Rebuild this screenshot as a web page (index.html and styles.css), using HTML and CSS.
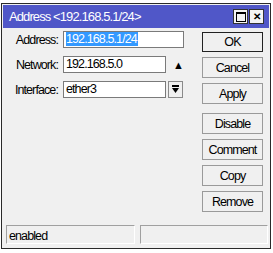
FILE: index.html
```html
<!DOCTYPE html>
<html lang="en">
<head>
    <meta charset="UTF-8">
    <title>Address &lt;192.168.5.1/24&gt;</title>
    <link rel="stylesheet" href="styles.css">
</head>
<body>
    <div class="window">
        <div class="titlebar">
            <span class="title">Address &lt;192.168.5.1/24&gt;</span>
            <div class="title-btns">
                <div class="tbtn"><span class="max-icon"></span></div>
                <div class="tbtn close">&#x2715;</div>
            </div>
        </div>
        <div class="main">
            <div class="form">
                <div class="row">
                    <label>Address:</label>
                    <div class="field wide"><span class="sel">192.168.5.1/24</span></div>
                </div>
                <div class="row">
                    <label>Network:</label>
                    <div class="field">192.168.5.0</div>
                    <span class="arrow">&#9650;</span>
                </div>
                <div class="row">
                    <label>Interface:</label>
                    <div class="field">ether3</div>
                    <div class="dd">
                        <svg width="9" height="9" viewBox="0 0 9 9"><rect x="1" y="0" width="7" height="2" fill="#000"/><polygon points="1,3 8,3 4.5,8" fill="#000"/></svg>
                    </div>
                </div>
            </div>
            <div class="buttons">
                <div class="btn default">OK</div>
                <div class="btn">Cancel</div>
                <div class="btn">Apply</div>
                <div class="btn gap">Disable</div>
                <div class="btn">Comment</div>
                <div class="btn">Copy</div>
                <div class="btn">Remove</div>
            </div>
        </div>
        <div class="status">
            <div class="cell">enabled</div>
            <div class="cell"></div>
        </div>
    </div>
</body>
</html>
```

FILE: styles.css
```css
body {
    margin: 0;
    background: white;
    font-family: "Liberation Sans", Arial, sans-serif;
    font-size: 12.5px;
    letter-spacing: -0.9px;
}
.window {
    margin: 3px 0 0 1px;
    width: 270px;
    height: 246px;
    border: 1px solid #2a2a2a;
    background: #f0f0f0;
    display: flex;
    flex-direction: column;
    box-sizing: border-box;
}
.titlebar {
    height: 23px;
    background: #5057c8;
    color: white;
    display: flex;
    align-items: center;
    justify-content: space-between;
    padding: 0 5px 0 6px;
    border: 1px solid #f0f0f0;
    border-bottom: none;
}
.title { font-size: 13px; letter-spacing: -0.9px; }
.title-btns { display: flex; gap: 1px; }
.tbtn {
    width: 13px;
    height: 13px;
    background: #f4f4f4;
    border: 1px solid #333;
    display: flex;
    align-items: center;
    justify-content: center;
    color: #000;
    font-size: 10px;
    font-weight: bold;
    letter-spacing: 0;
}
.max-icon {
    width: 8px;
    height: 7px;
    border: 1px solid #000;
    border-top-width: 2px;
}
.main {
    flex: 1;
    display: flex;
    justify-content: space-between;
    padding: 3px 7px 0 0;
}
.form { display: flex; flex-direction: column; gap: 8px; }
.row { display: flex; align-items: center; height: 17px; }
.row label { width: 56px; text-align: right; padding-right: 5px; color: #000; }
.field {
    width: 103px;
    height: 17px;
    box-sizing: border-box;
    border: 1px solid #7a7a7a;
    background: white;
    padding: 1px 2px;
    line-height: 13px;
}
.field.wide { width: 121px; }
.sel { background: #3399ff; color: white; padding-right: 1px; }
.arrow { font-size: 11px; margin-left: 7px; letter-spacing: 0; }
.dd {
    width: 15px;
    height: 17px;
    box-sizing: border-box;
    border: 1px solid #8a8a8a;
    background: #f0f0f0;
    margin-left: 2px;
    display: flex;
    align-items: center;
    justify-content: center;
}
.buttons { display: flex; flex-direction: column; gap: 5px; padding-top: 1px; }
.btn {
    width: 61px;
    height: 21px;
    box-sizing: border-box;
    border: 1px solid #9a9a9a;
    background: #f0f0f0;
    display: flex;
    align-items: center;
    justify-content: center;
}
.btn.default { border-color: #222; height: 20px; }
.btn.gap { margin-top: 4px; }
.status {
    display: flex;
    gap: 5px;
    padding: 0 2px 4px 4px;
    height: 19px;
}
.cell {
    flex: 1;
    border: 1px solid #a0a0a0;
    border-right-color: #fff;
    border-bottom-color: #fff;
    padding: 3px 2px 0;
}
```
